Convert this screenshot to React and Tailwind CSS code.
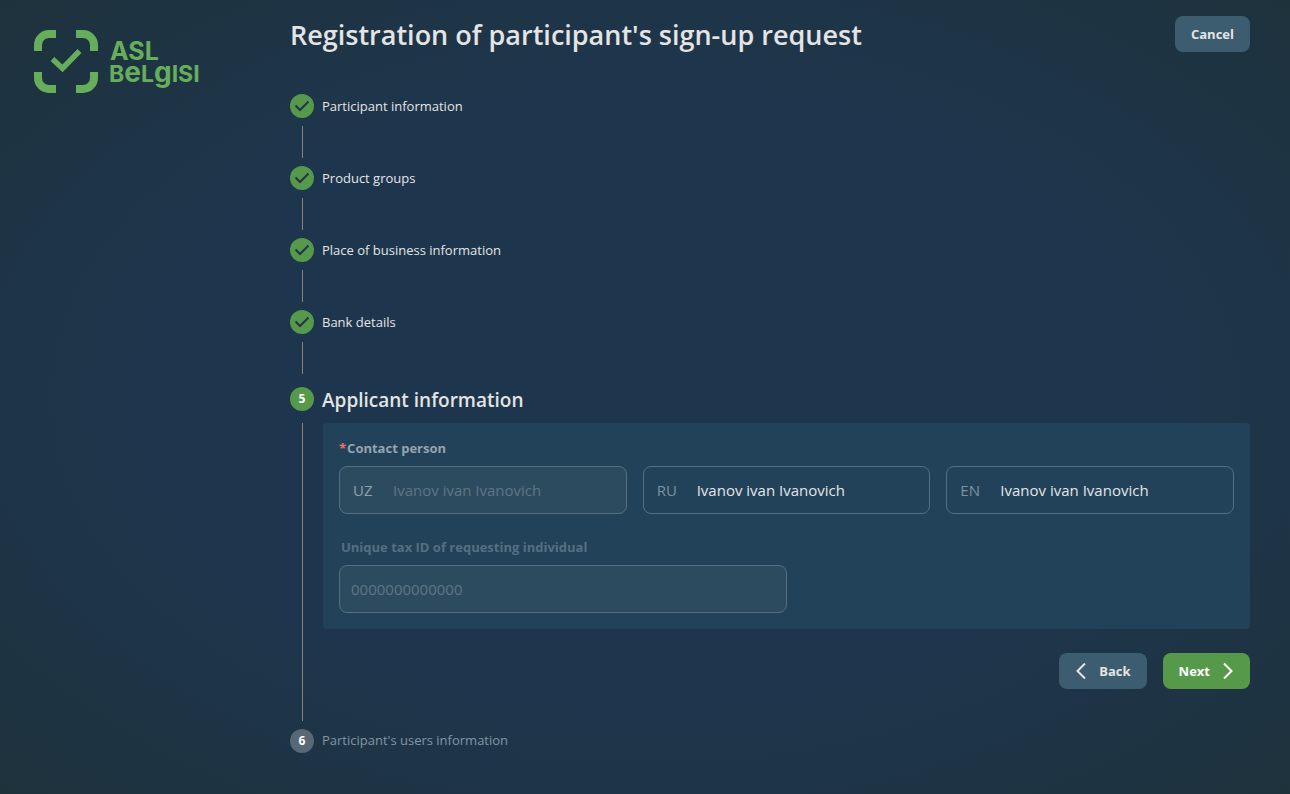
import React from "react";

const doneSteps = [
  "Participant information",
  "Product groups",
  "Place of business information",
  "Bank details",
];

function Logo() {
  return (
    <a href="#" aria-label="Asl Belgisi" className="block">
      <svg viewBox="0 0 168 66" className="h-[66px] w-[168px]" fill="none">
        <g stroke="#66ae5b" strokeWidth="8">
          <path d="M22 4H15A11 11 0 0 0 4 15V21" />
          <path d="M42 4H49A11 11 0 0 1 60 15V21" />
          <path d="M4 42V48A11 11 0 0 0 15 59H22" />
          <path d="M60 42V48A11 11 0 0 1 49 59H42" />
          <path d="M18.5 29L28.5 38.5L45.5 21" strokeWidth="5.5" />
        </g>
        <g fill="#66ae5b" fontFamily="Inter, sans-serif" fontWeight="700">
          <text x="76" y="30" fontSize="25">ASL</text>
          <text x="75" y="52" fontSize="23">
            B<tspan fontSize="28">e</tspan>L<tspan fontSize="28">g</tspan>ISI
          </text>
        </g>
      </svg>
    </a>
  );
}

function CheckBadge() {
  return (
    <svg viewBox="0 0 24 24" className="size-6 shrink-0" fill="none" aria-hidden="true">
      <circle cx="12" cy="12" r="12" fill="#57994b" />
      <path d="M5.5 11.5L10 16L18.5 7.5" stroke="#1f364d" strokeWidth="2" />
    </svg>
  );
}

function NumberBadge({ children, className }) {
  return (
    <span className={`flex size-6 shrink-0 items-center justify-center rounded-full text-xs leading-5 font-bold text-white ${className}`}>
      {children}
    </span>
  );
}

function NameField({ code, disabled }) {
  return (
    <label
      className={`flex h-12 min-w-0 flex-1 items-center rounded-lg border border-[#566f80] px-[13px] ${disabled ? "bg-[#2d4b5f]" : ""}`}
    >
      <span className={`w-10 shrink-0 text-[15px] ${disabled ? "text-[#8fa0ac]" : "text-[#7d92a1]"}`}>{code}</span>
      <input
        type="text"
        disabled={disabled}
        defaultValue="Ivanov ivan Ivanovich"
        className="w-full min-w-0 bg-transparent text-[15px] text-[#e4e5e6] outline-none disabled:text-[#5f7585]"
      />
    </label>
  );
}

export default function App() {
  return (
    <div className="flex min-h-screen bg-[radial-gradient(ellipse_at_center,#1e364d_55%,#1e323c_100%)] font-['Open_Sans',sans-serif] text-[#e4e4e4]">
      <aside className="w-[290px] shrink-0 pt-[30px] pl-[34px]">
        <Logo />
      </aside>

      <main className="min-w-0 flex-1 pr-10 pb-8">
        <header className="flex h-14 items-start justify-between pt-4">
          <h1 className="text-[27px] leading-[38px] font-semibold">Registration of participant's sign-up request</h1>
          <button type="button" className="h-9 rounded-lg bg-[#3c5d6f] px-4 text-[13px] leading-5 font-bold">
            Cancel
          </button>
        </header>

        <ol className="pt-[38px]">
          {doneSteps.map((title) => (
            <li key={title}>
              <div className="flex h-6 items-center gap-2">
                <CheckBadge />
                <span className="text-[13px] leading-5">{title}</span>
              </div>
              <div className="my-2 ml-3 h-8 w-px bg-[#84807e]" />
            </li>
          ))}

          <li className="pt-1">
            <div className="flex h-[29px] items-start gap-2 pt-px">
              <NumberBadge className="bg-[#57994b]">5</NumberBadge>
              <h2 className="text-[19px] leading-[26px] font-semibold">Applicant information</h2>
            </div>
            <div className="mt-2 flex">
              <div className="ml-3 w-px shrink-0 bg-[#84807e]" />
              <form className="ml-5 min-w-0 flex-1 pb-8" onSubmit={(e) => e.preventDefault()}>
                <div className="rounded bg-[#224259] p-4">
                  <fieldset>
                    <legend className="text-[13px] leading-[18px] font-bold text-[#93a4b0]">
                      <span className="mr-px text-[#f56c6c]">*</span>Contact person
                    </legend>
                    <div className="mt-[9px] flex gap-4">
                      <NameField code="UZ" disabled />
                      <NameField code="RU" />
                      <NameField code="EN" />
                    </div>
                  </fieldset>
                  <label
                    htmlFor="tax-id"
                    className="mt-6 block pl-0.5 text-[13px] leading-[18px] font-bold text-[#566f80]"
                  >
                    Unique tax ID of requesting individual
                  </label>
                  <input
                    id="tax-id"
                    type="text"
                    disabled
                    defaultValue="0000000000000"
                    className="mt-[9px] block h-12 w-1/2 rounded-lg border border-[#566f80] bg-[#2d4b5f] px-[11px] text-[15px] text-[#5f7585]"
                  />
                </div>
                <div className="mt-6 flex justify-end gap-4">
                  <button type="button" className="flex h-9 items-center gap-3 rounded-lg bg-[#3c5d6f] px-4 text-[13px] leading-5 font-bold">
                    <svg viewBox="0 0 12 16" className="h-4 w-3" fill="none" stroke="currentColor" strokeWidth="2" aria-hidden="true">
                      <path d="M10 0.5L2.5 8L10 15.5" />
                    </svg>
                    Back
                  </button>
                  <button type="submit" className="flex h-9 items-center gap-3 rounded-lg bg-[#57994b] px-4 text-[13px] leading-5 font-bold text-white">
                    Next
                    <svg viewBox="0 0 12 16" className="h-4 w-3" fill="none" stroke="currentColor" strokeWidth="2" aria-hidden="true">
                      <path d="M2 0.5L9.5 8L2 15.5" />
                    </svg>
                  </button>
                </div>
              </form>
            </div>
          </li>

          <li className="mt-2 flex h-6 items-center gap-2">
            <NumberBadge className="bg-[#586877]">6</NumberBadge>
            <span className="text-[13px] text-[#8295a4]">Participant's users information</span>
          </li>
        </ol>
      </main>
    </div>
  );
}
